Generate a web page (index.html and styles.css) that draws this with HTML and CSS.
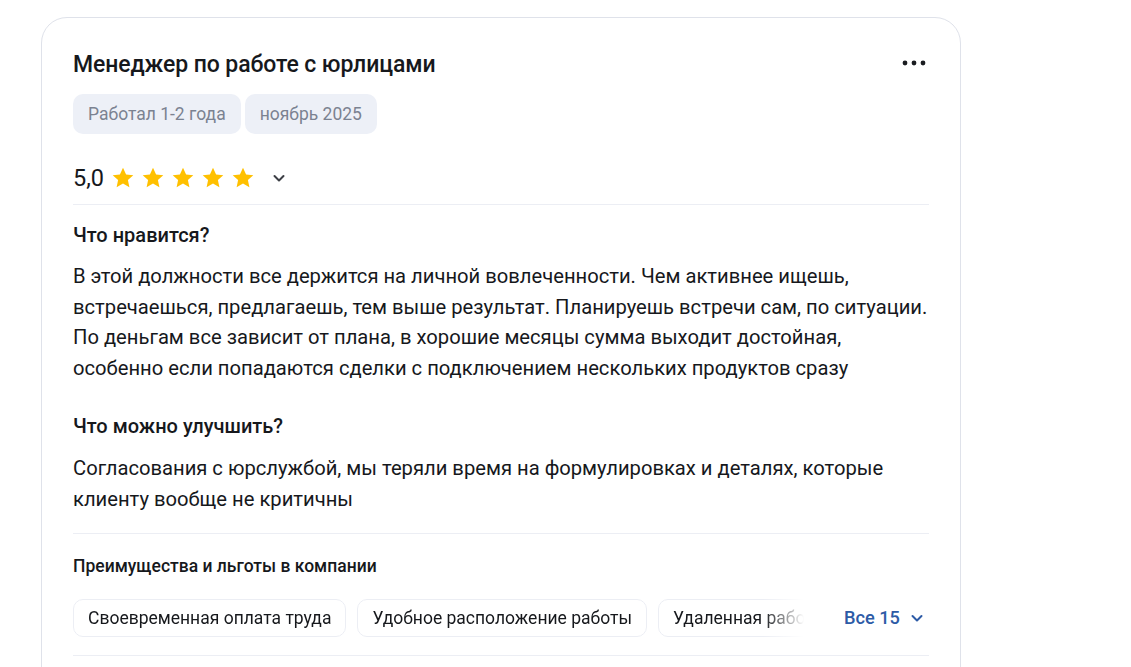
FILE: index.html
```html
<!DOCTYPE html>
<html lang="ru">
<head>
<meta charset="utf-8">
<link rel="stylesheet" href="styles.css">
</head>
<body>
<div class="page">
  <article class="card">
    <header class="card-head">
      <h2 class="title">Менеджер по работе с юрлицами</h2>
      <button class="more" aria-label="Ещё">
        <svg width="24" height="6" viewBox="0 0 24 6"><circle cx="3" cy="3" r="2.4" fill="#1a1c20"/><circle cx="12" cy="3" r="2.4" fill="#1a1c20"/><circle cx="21" cy="3" r="2.4" fill="#1a1c20"/></svg>
      </button>
    </header>
    <div class="tags">
      <span class="tag">Работал 1-2 года</span>
      <span class="tag">ноябрь 2025</span>
    </div>
    <div class="rating">
      <span class="score">5,0</span>
      <span class="stars">
        <svg class="star" viewBox="0 0 24 24"><path d="M12 1.8l3.1 6.6 7.2.8-5.4 4.9 1.5 7.1L12 17.6l-6.4 3.6 1.5-7.1L1.7 9.2l7.2-.8z" fill="#ffc000"/></svg>
        <svg class="star" viewBox="0 0 24 24"><path d="M12 1.8l3.1 6.6 7.2.8-5.4 4.9 1.5 7.1L12 17.6l-6.4 3.6 1.5-7.1L1.7 9.2l7.2-.8z" fill="#ffc000"/></svg>
        <svg class="star" viewBox="0 0 24 24"><path d="M12 1.8l3.1 6.6 7.2.8-5.4 4.9 1.5 7.1L12 17.6l-6.4 3.6 1.5-7.1L1.7 9.2l7.2-.8z" fill="#ffc000"/></svg>
        <svg class="star" viewBox="0 0 24 24"><path d="M12 1.8l3.1 6.6 7.2.8-5.4 4.9 1.5 7.1L12 17.6l-6.4 3.6 1.5-7.1L1.7 9.2l7.2-.8z" fill="#ffc000"/></svg>
        <svg class="star" viewBox="0 0 24 24"><path d="M12 1.8l3.1 6.6 7.2.8-5.4 4.9 1.5 7.1L12 17.6l-6.4 3.6 1.5-7.1L1.7 9.2l7.2-.8z" fill="#ffc000"/></svg>
      </span>
      <svg class="chev" width="16" height="16" viewBox="0 0 16 16"><path d="M3.5 6l4.5 4.5L12.5 6" fill="none" stroke="#3c3f45" stroke-width="2" stroke-linecap="round" stroke-linejoin="round"/></svg>
    </div>
    <div class="section">
      <h3 class="q">Что нравится?</h3>
      <p class="text">В этой должности все держится на личной вовлеченности. Чем активнее ищешь, встречаешься, предлагаешь, тем выше результат. Планируешь встречи сам, по ситуации. По деньгам все зависит от плана, в хорошие месяцы сумма выходит достойная, особенно если попадаются сделки с подключением нескольких продуктов сразу</p>
      <h3 class="q q2">Что можно улучшить?</h3>
      <p class="text text2">Согласования с юрслужбой, мы теряли время на формулировках и деталях, которые клиенту вообще не критичны</p>
    </div>
    <div class="benefits">
      <h4 class="b-title">Преимущества и льготы в компании</h4>
      <div class="b-row">
        <div class="b-list">
          <span class="b-chip">Своевременная оплата труда</span>
          <span class="b-chip">Удобное расположение работы</span>
          <span class="b-chip">Удаленная работа</span>
        </div>
        <button class="all">Все 15
          <svg width="16" height="16" viewBox="0 0 16 16"><path d="M3.5 6l4.5 4.5L12.5 6" fill="none" stroke="#2d5ba6" stroke-width="2" stroke-linecap="round" stroke-linejoin="round"/></svg>
        </button>
      </div>
    </div>
  </article>
</div>
</body>
</html>
```
FILE: styles.css
```css
* { box-sizing: border-box; }
html, body { margin: 0; padding: 0; background: #fff; }
body {
  font-family: Roboto, "Noto Sans", Arial, sans-serif;
  color: #16181c;
  overflow: hidden;
  height: 667px;
}
.page {
  padding: 17px 0 0 41px;
}
.card {
  width: 920px;
  height: 800px;
  border: 1px solid #dfe2ea;
  border-radius: 26px;
  padding: 30px 31px 0 31px;
  background: #fff;
}
.card-head {
  display: flex;
  justify-content: space-between;
  align-items: flex-start;
}
.title {
  margin: 0;
  font-size: 23px;
  font-weight: 500;
  line-height: 34px;
  letter-spacing: -0.1px;
}
.more {
  border: 0;
  background: none;
  padding: 0;
  margin-top: 12px;
  margin-right: 3px;
  display: flex;
}
.tags {
  display: flex;
  gap: 4px;
  margin-top: 12px;
}
.tag {
  background: #edf0f7;
  color: #7b8291;
  font-size: 17.5px;
  line-height: 20px;
  padding: 10px 15px;
  border-radius: 10px;
}
.rating {
  display: flex;
  align-items: center;
  height: 71px;
  padding-bottom: 1px;
  padding-top: 18px;
  border-bottom: 1px solid #eceef4;
}
.score {
  font-size: 23.5px;
  line-height: 26px;
  margin-right: 7px;
}
.stars { display: flex; gap: 6px; }
.star { width: 24px; height: 24px; display: block; }
.chev { margin-left: 16px; }
.section { padding-top: 18px; }
.q {
  margin: 0;
  font-size: 20px;
  font-weight: 500;
  line-height: 24px;
}
.q2 { margin-top: 31px; }
.text {
  margin: 14px 0 0 0;
  font-size: 20.2px;
  line-height: 30.6px;
  font-weight: 400;
}
.text2 { margin-top: 15px; }
.benefits {
  margin-top: 18px;
  border-top: 1px solid #eceef4;
  border-bottom: 1px solid #eceef4;
  padding: 21px 0 18px;
}
.b-title {
  margin: 0;
  font-size: 17.5px;
  font-weight: 500;
  line-height: 22px;
}
.b-row {
  display: flex;
  align-items: center;
  margin-top: 22px;
}
.b-list {
  display: flex;
  gap: 11px;
  width: 731px;
  overflow: hidden;
  -webkit-mask-image: linear-gradient(to right, #000 690px, transparent 731px);
  mask-image: linear-gradient(to right, #000 690px, transparent 731px);
}
.b-chip {
  flex: none;
  border: 1px solid #eceef4;
  border-radius: 10px;
  padding: 8px 14px;
  font-size: 17.5px;
  line-height: 20px;
  white-space: nowrap;
}
.all {
  border: 0;
  background: none;
  padding: 0;
  margin-left: 40px;
  font-family: inherit;
  font-size: 18.2px;
  font-weight: 500;
  color: #2d5ba6;
  display: flex;
  align-items: center;
  gap: 9px;
}
```
